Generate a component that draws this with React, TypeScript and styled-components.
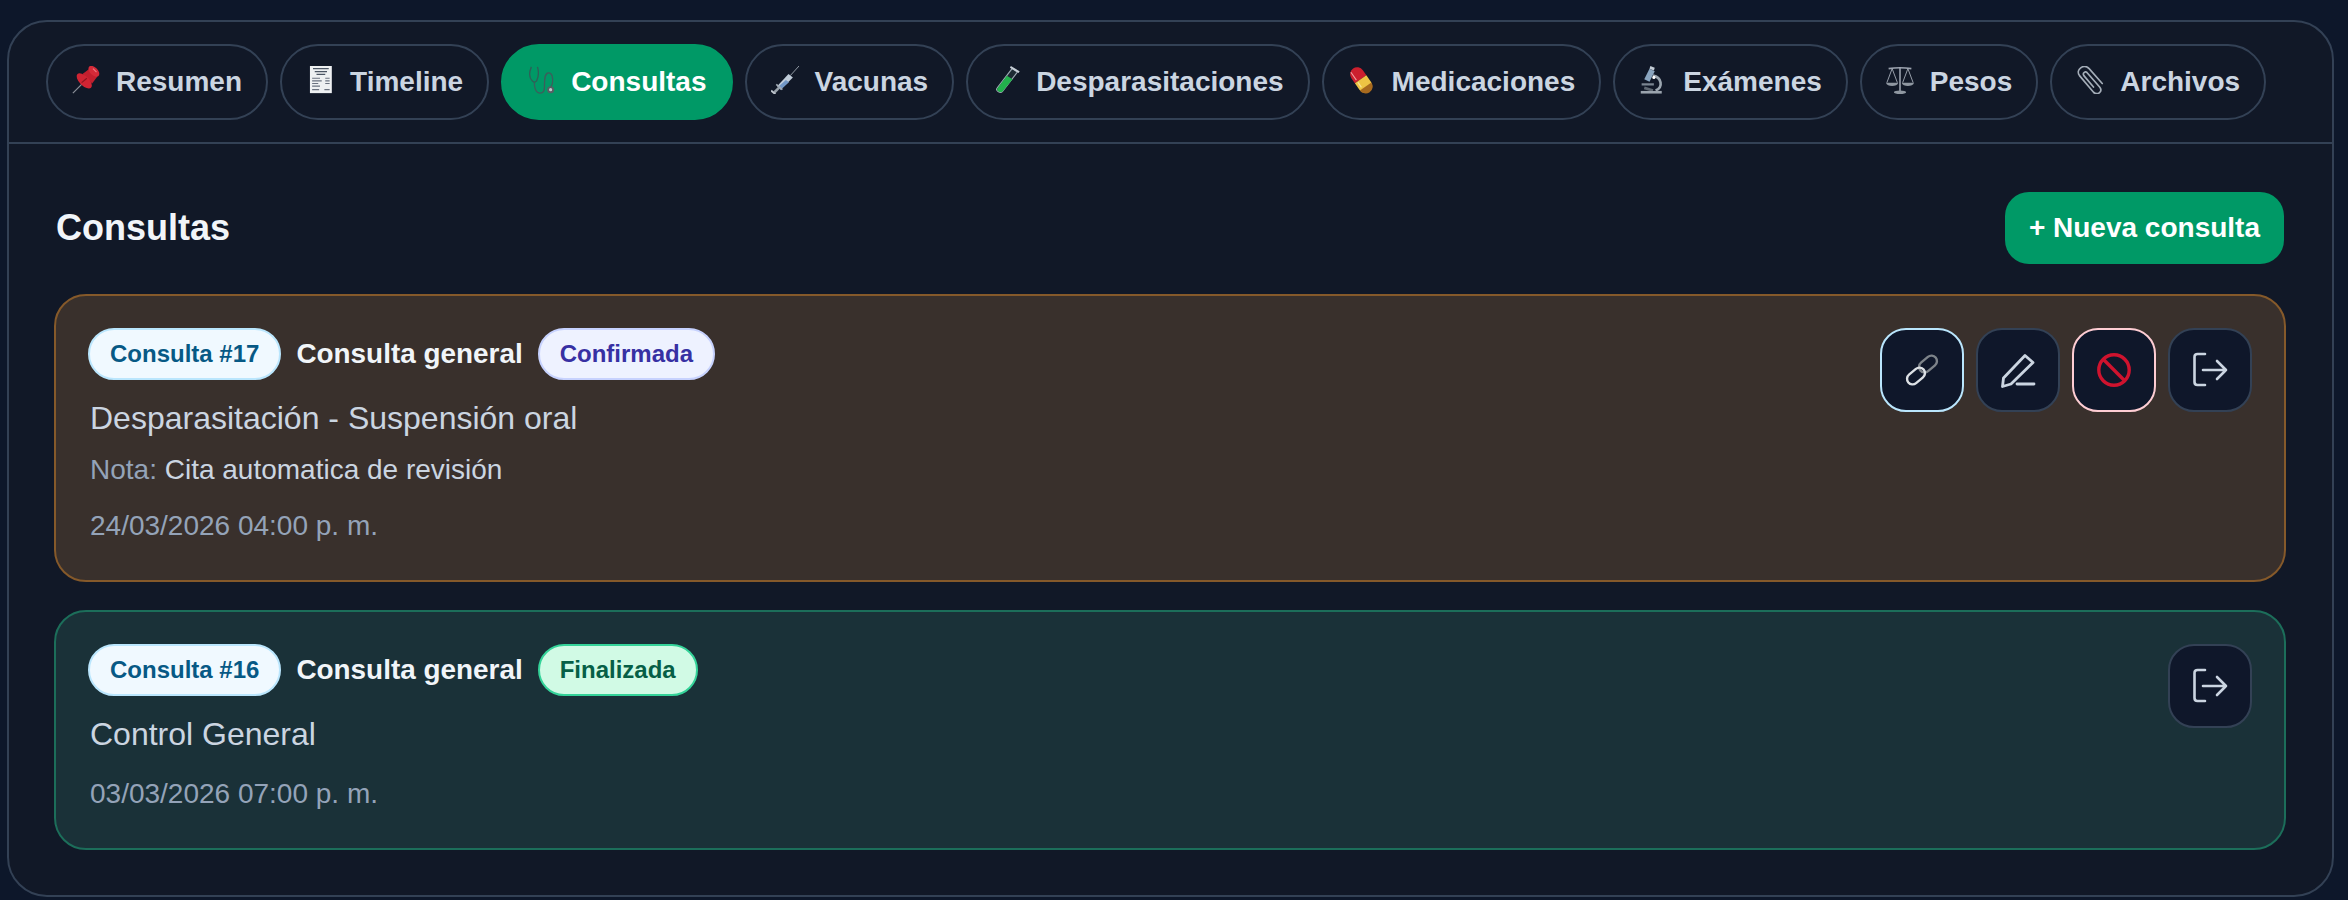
import React from "react"
import styled, { createGlobalStyle } from "styled-components"

const GlobalStyle = createGlobalStyle`
  html, body {
    margin: 0;
    padding: 0;
    background: #0d172a;
  }
  body {
    font-family: "Liberation Sans", Arial, sans-serif;
  }
  * {
    box-sizing: border-box;
  }
`

const Page = styled.div`
  padding: 20px 14px 0 7px;
  height: 900px;
  overflow: hidden;
`

const Panel = styled.div`
  height: 877px;
  background: #111827;
  border: 2px solid #334155;
  border-radius: 40px;
  overflow: hidden;
`

const TabBar = styled.nav`
  display: flex;
  gap: 12px;
  padding: 22px 37px 22px;
  border-bottom: 2px solid #334155;
`

const Tab = styled.button<{ $active?: boolean }>`
  display: flex;
  align-items: center;
  gap: 16px;
  height: 76px;
  padding: 0 24px;
  border: 2px solid ${(p) => (p.$active ? "#009966" : "#334155")};
  border-radius: 38px;
  background: ${(p) => (p.$active ? "#009966" : "transparent")};
  color: ${(p) => (p.$active ? "#ffffff" : "#cbd5e1")};
  font: bold 28px "Liberation Sans", Arial, sans-serif;
  white-space: nowrap;
`

const TabIcon = styled.svg`
  width: 28px;
  height: 28px;
  margin-bottom: 5px;
  flex: none;
`

const Section = styled.section`
  padding: 48px 46px 0 45px;
`

const SectionHeader = styled.header`
  display: flex;
  justify-content: space-between;
  align-items: center;
  margin-bottom: 30px;
  padding: 0 2px;
`

const Title = styled.h2`
  margin: 0;
  color: #f1f5f9;
  font-size: 36px;
  font-weight: bold;
`

const NewButton = styled.button`
  height: 72px;
  padding: 0 24px;
  border: none;
  border-radius: 24px;
  background: #009966;
  color: #ffffff;
  font: bold 28px "Liberation Sans", Arial, sans-serif;
`

const CardList = styled.div`
  display: flex;
  flex-direction: column;
  gap: 28px;
`

const Card = styled.article<{ $tone: "pending" | "done" }>`
  display: flex;
  justify-content: space-between;
  align-items: flex-start;
  padding: 32px;
  border: 2px solid ${(p) => (p.$tone === "pending" ? "#85592a" : "#1c6e5a")};
  border-radius: 32px;
  background: ${(p) => (p.$tone === "pending" ? "#39302c" : "#1a3138")};
`

const CardBody = styled.div`
  display: flex;
  flex-direction: column;
`

const BadgeRow = styled.div`
  display: flex;
  align-items: center;
  gap: 15px;
  margin-bottom: 12px;
`

const badgeTones = {
  id: { bg: "#f0f9ff", border: "#bae6fd", color: "#075985" },
  confirmed: { bg: "#eef2ff", border: "#c7d2fe", color: "#3730a3" },
  finished: { bg: "#d1fae5", border: "#34d399", color: "#065f46" },
}

const Badge = styled.span<{ $tone: keyof typeof badgeTones }>`
  height: 52px;
  display: flex;
  align-items: center;
  padding: 0 20px;
  border: 2px solid ${(p) => badgeTones[p.$tone].border};
  border-radius: 26px;
  background: ${(p) => badgeTones[p.$tone].bg};
  color: ${(p) => badgeTones[p.$tone].color};
  font-size: 24px;
  font-weight: bold;
`

const TypeLabel = styled.span`
  color: #f1f5f9;
  font-size: 27.9px;
  font-weight: bold;
`

const Reason = styled.div`
  padding: 1px 0 0 2px;
  color: #cbd5e1;
  font-size: 32px;
  line-height: 51px;
`

const Note = styled.div`
  margin-top: 3px;
  padding-left: 2px;
  color: #cbd5e1;
  font-size: 28px;
  line-height: 45px;
`

const NoteLabel = styled.span`
  color: #94a3b8;
`

const DateText = styled.div`
  margin-top: 11px;
  padding-left: 2px;
  color: #94a3b8;
  font-size: 28px;
  line-height: 45px;
`

const Actions = styled.div`
  display: flex;
  gap: 12px;
`

const actionBorders = {
  plain: "#334155",
  link: "#bae6fd",
  danger: "#fecdd3",
}

const ActionButton = styled.button<{ $tone: keyof typeof actionBorders }>`
  width: 84px;
  height: 84px;
  display: flex;
  align-items: center;
  justify-content: center;
  padding: 0;
  border: 2px solid ${(p) => actionBorders[p.$tone]};
  border-radius: 26px;
  background: #0f172a;
`

const ActionIcon = styled.svg`
  width: 36px;
  height: 36px;
`

const PinIcon = () => (
  <TabIcon viewBox="0 0 32 32">
    <path d="M1 31 L13 19" stroke="#8a8f98" strokeWidth="1.5" />
    <path d="M12 9 L20 3 L29 12 L23 20 Z" fill="#c21f2e" />
    <ellipse cx="14" cy="17" rx="11" ry="5.5" transform="rotate(45 14 17)" fill="#d02433" />
    <ellipse cx="25" cy="6" rx="7.5" ry="4.5" transform="rotate(45 25 6)" fill="#d42a38" />
    <path d="M11 19 L17 14" stroke="#8f1420" strokeWidth="1.4" />
    <path d="M24 3 L28 7" stroke="#ee7a82" strokeWidth="1.3" />
  </TabIcon>
)

const ReceiptIcon = () => (
  <TabIcon viewBox="0 0 32 32">
    <rect x="4.5" y="0" width="25" height="31" fill="#eef0f2" />
    <path d="M8 3h18M10 6.5h14M12 9.5h10" stroke="#4b5563" strokeWidth="1.4" />
    <path d="M7 14h9M22 14h5M7 17h11M22 17h5M7 20h7M22 20h5M7 23h9M7 27h8M21 27h6" stroke="#6b7280" strokeWidth="1.2" />
  </TabIcon>
)

const StethoscopeIcon = () => (
  <TabIcon viewBox="0 0 32 32">
    <g fill="none" stroke="#2f5f57" strokeWidth="1.5">
      <path d="M5 1 C2 8 3 14 6 17 C8 19 9 19 11 17 C13 13 14 8 12 1" />
      <path d="M8.5 19 C8 24 10 31 15 31 C20 31 20 26 20 22 C20 16 20 9 24 8 C29 7 30 14 29 20 L27 25" stroke="#3b5f5c" />
    </g>
    <circle cx="27" cy="27" r="4" fill="#565f64" />
    <circle cx="27" cy="27" r="1.8" fill="#c2c7cb" />
  </TabIcon>
)

const SyringeIcon = () => (
  <TabIcon viewBox="0 0 32 32">
    <path d="M32 0 L22 11" stroke="#a3acb6" strokeWidth="1" />
    <path d="M20 9 L25 13 L11 27 L7 23 Z" fill="#c0ccd9" />
    <path d="M17 16 L20.5 18.5 L11 27 L8 24 Z" fill="#7297c6" />
    <path d="M6 21 L13 27" stroke="#a3acb6" strokeWidth="2" />
    <path d="M9 25 L4 30" stroke="#98a1aa" strokeWidth="3" />
    <path d="M0 28 L5 32" stroke="#c0c7cf" strokeWidth="2.4" />
  </TabIcon>
)

const TubeIcon = () => (
  <TabIcon viewBox="0 0 32 32">
    <path d="M23 3 L29 7 L12 29 C9.5 32 3 28 6 25 Z" fill="#1d2a33" stroke="#9aa6b0" strokeWidth="1.3" />
    <path d="M17 11 L23.5 15 L12 29 C9.5 31 4 28 6.5 25 Z" fill="#22b14c" />
    <path d="M21 1 L31 7" stroke="#c6ced6" strokeWidth="2.2" />
  </TabIcon>
)

const PillIcon = () => (
  <TabIcon viewBox="0 0 32 32">
    <g transform="rotate(-35 15 16)">
      <path d="M7 15 V8 a8 8 0 0 1 16 0 V15 Z" fill="#cc1f2e" />
      <path d="M7 15 H23 V24 a8 8 0 0 1 -16 0 Z" fill="#eec444" />
      <path d="M7 25 H23 a8 8 0 0 1 -16 0 Z" fill="#a86a1e" />
      <path d="M10.5 2 V13" stroke="#f2a0a4" strokeWidth="1.2" />
      <path d="M10.5 16 V23" stroke="#f8e59a" strokeWidth="1.4" />
    </g>
  </TabIcon>
)

const MicroscopeIcon = () => (
  <TabIcon viewBox="0 0 32 32">
    <path d="M12 3 L18 6 L12 18 L6 15 Z" fill="#8aa5bf" />
    <path d="M13 0 L18 2 L17 5 L12 3 Z" fill="#c3ccd5" />
    <path d="M16 11 C26 13 28 24 19 28" fill="none" stroke="#9ca6b0" strokeWidth="3" />
    <path d="M3 21 H17" stroke="#7b8591" strokeWidth="2.4" />
    <path d="M6 25 L16 28" stroke="#5f6872" strokeWidth="3" />
    <circle cx="17" cy="13" r="1.8" fill="#ffffff" />
    <rect x="2" y="28.5" width="24" height="3" fill="#9aa3ad" />
  </TabIcon>
)

const ScalesIcon = () => (
  <TabIcon viewBox="0 0 32 32">
    <g fill="none" stroke="#9ca3af" strokeWidth="1.1">
      <path d="M3 3 Q16 1 29 3" strokeWidth="1.8" />
      <path d="M16 1 V29" strokeWidth="1.8" />
      <path d="M7 3 L1 19 M7 3 L13 19 M25 3 L19 19 M25 3 L31 19" />
    </g>
    <path d="M0 19 H14 C13 24 1 24 0 19 Z M18 19 H32 C31 24 19 24 18 19 Z" fill="#8f97a1" />
    <ellipse cx="16" cy="30" rx="7" ry="2" fill="#8f97a1" />
  </TabIcon>
)

const ClipIcon = () => (
  <TabIcon viewBox="0 0 32 32">
    <path
      d="M20 24 L9 11 C7 8 11 5 13 8 L27 24 C31 29 25 34 20 30 L4 11 C-1 4 9 -3 15 3 L30 20"
      fill="none"
      stroke="#a4adb8"
      strokeWidth="1.9"
      strokeLinecap="round"
    />
  </TabIcon>
)

const LinkIcon = () => (
  <ActionIcon viewBox="0 0 36 36">
    <g fill="none">
      <rect x="14" y="6.5" width="20" height="11" rx="5.5" transform="rotate(-40 24 12)" stroke="#7d8389" strokeWidth="2.4" />
      <rect x="2" y="18.5" width="20" height="11" rx="5.5" transform="rotate(-40 12 24)" stroke="#dde1e5" strokeWidth="2.4" />
    </g>
  </ActionIcon>
)

const PencilIcon = () => (
  <ActionIcon viewBox="0 0 36 36">
    <g fill="none" stroke="#cbd5e1" strokeWidth="2.8" strokeLinecap="round" strokeLinejoin="round">
      <path d="M25 3.5 L33 10.5 L11 32 L2.5 34.5 L3.5 26 Z" />
      <path d="M17 32 H34" />
    </g>
  </ActionIcon>
)

const BanIcon = () => (
  <ActionIcon viewBox="0 0 36 36">
    <g fill="none" stroke="#cf132e" strokeWidth="3.4">
      <circle cx="18" cy="18" r="15.2" />
      <path d="M7.3 7.3 L28.7 28.7" />
    </g>
  </ActionIcon>
)

const ExitIcon = () => (
  <ActionIcon viewBox="0 0 36 36">
    <g fill="none" stroke="#cbd5e1" strokeWidth="2.6" strokeLinecap="round" strokeLinejoin="round">
      <path d="M13 2 H5.5 Q2.5 2 2.5 5 V30 Q2.5 33 5.5 33 H13" />
      <path d="M11 18 H34 M25 9 L34 18 L25 27" />
    </g>
  </ActionIcon>
)

const tabs = [
  { label: "Resumen", icon: <PinIcon /> },
  { label: "Timeline", icon: <ReceiptIcon /> },
  { label: "Consultas", icon: <StethoscopeIcon />, active: true },
  { label: "Vacunas", icon: <SyringeIcon /> },
  { label: "Desparasitaciones", icon: <TubeIcon /> },
  { label: "Medicaciones", icon: <PillIcon /> },
  { label: "Exámenes", icon: <MicroscopeIcon /> },
  { label: "Pesos", icon: <ScalesIcon /> },
  { label: "Archivos", icon: <ClipIcon /> },
]

export default function App() {
  return (
    <Page>
      <GlobalStyle />
      <Panel>
        <TabBar>
          {tabs.map((tab) => (
            <Tab key={tab.label} $active={tab.active}>
              {tab.icon}
              {tab.label}
            </Tab>
          ))}
        </TabBar>
        <Section>
          <SectionHeader>
            <Title>Consultas</Title>
            <NewButton>+ Nueva consulta</NewButton>
          </SectionHeader>
          <CardList>
            <Card $tone="pending">
              <CardBody>
                <BadgeRow>
                  <Badge $tone="id">Consulta #17</Badge>
                  <TypeLabel>Consulta general</TypeLabel>
                  <Badge $tone="confirmed">Confirmada</Badge>
                </BadgeRow>
                <Reason>Desparasitación - Suspensión oral</Reason>
                <Note>
                  <NoteLabel>Nota:</NoteLabel> Cita automatica de revisión
                </Note>
                <DateText>24/03/2026 04:00 p. m.</DateText>
              </CardBody>
              <Actions>
                <ActionButton $tone="link"><LinkIcon /></ActionButton>
                <ActionButton $tone="plain"><PencilIcon /></ActionButton>
                <ActionButton $tone="danger"><BanIcon /></ActionButton>
                <ActionButton $tone="plain"><ExitIcon /></ActionButton>
              </Actions>
            </Card>
            <Card $tone="done">
              <CardBody>
                <BadgeRow>
                  <Badge $tone="id">Consulta #16</Badge>
                  <TypeLabel>Consulta general</TypeLabel>
                  <Badge $tone="finished">Finalizada</Badge>
                </BadgeRow>
                <Reason>Control General</Reason>
                <DateText>03/03/2026 07:00 p. m.</DateText>
              </CardBody>
              <Actions>
                <ActionButton $tone="plain"><ExitIcon /></ActionButton>
              </Actions>
            </Card>
          </CardList>
        </Section>
      </Panel>
    </Page>
  )
}
